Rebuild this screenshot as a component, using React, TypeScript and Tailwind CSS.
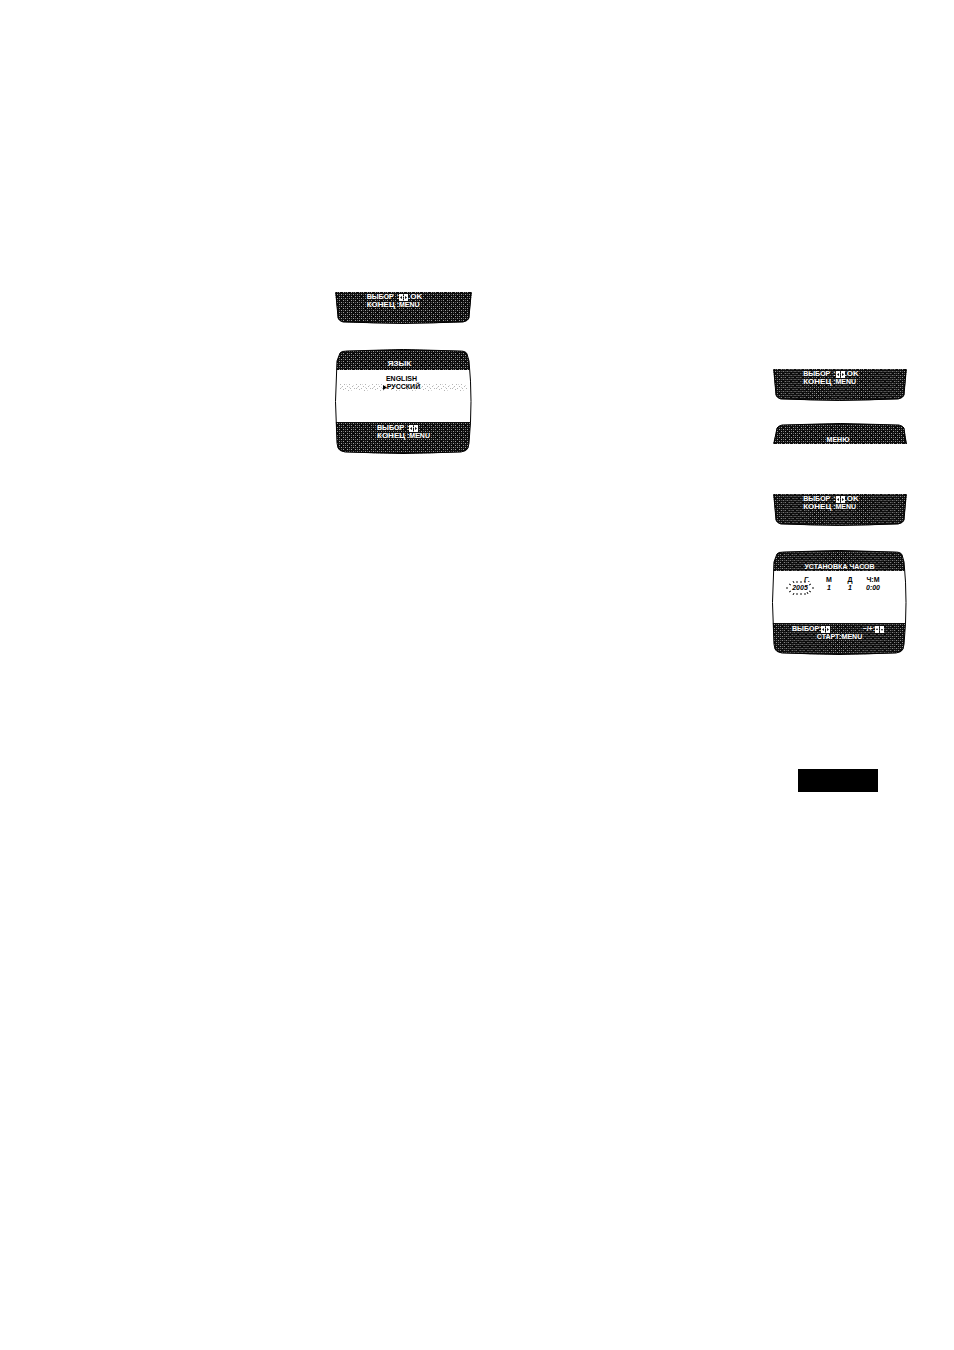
import type { ReactNode } from "react";

const SCREEN =
  "M5 4 Q6 2 12 2 Q68 -1 125 2 Q131 2 132 5 L134 12 Q138 52 134 94 L133 99 Q132 102 126 103 Q68 106 10 103 Q4 102 3 99 L2 94 Q-1 52 2 12 Z";

function Dither({ id }: { id: string }) {
  return (
    <defs>
      <pattern id={id} width="8" height="8" patternUnits="userSpaceOnUse">
        <rect width="8" height="8" fill="#0c0c0c" />
        <path
          d="M0 0h1v1h-1zM4 0h1v1h-1zM2 2h1v1h-1zM6 2h1v1h-1zM0 4h1v1h-1zM4 4h1v1h-1zM2 6h1v1h-1zM6 6h1v1h-1z"
          fill="#a0a0a0"
        />
        <path d="M2 0h1v1h-1zM6 4h1v1h-1zM0 2h1v1h-1zM4 6h1v1h-1zM0 6h1v1h-1zM4 2h1v1h-1z" fill="#585858" />
      </pattern>
    </defs>
  );
}

function Keys({ vertical = false }: { vertical?: boolean }) {
  return (
    <svg className="h-[7px] w-[9px] shrink-0" viewBox="0 0 9 7" aria-hidden="true">
      <path d="M0 0h4v7H0zM5 0h4v7H5z" fill="#fff" />
      {vertical ? (
        <path d="M1 4l1-2L3 4zM6 3l1 2L8 3z" fill="#111" />
      ) : (
        <path d="M3 2v3L1 3.5zM6 2v3l2-1.5z" fill="#111" />
      )}
    </svg>
  );
}

function Legend({ ok = false }: { ok?: boolean }) {
  return (
    <dl className="grid grid-cols-[30px_auto] text-[7px] leading-[8px] font-bold text-white">
      <dt>ВЫБОР</dt>
      <dd className="flex items-center">
        :<Keys />
        {ok && <span className="text-[8px]">.OK</span>}
      </dd>
      <dt className="text-[8px]">КОНЕЦ</dt>
      <dd>:MENU</dd>
    </dl>
  );
}

function FooterStrip({ id, className }: { id: string; className: string }) {
  return (
    <section className={`grid h-[32px] ${className}`}>
      <svg className="col-start-1 row-start-1 h-full w-full" viewBox="0 0 137 32" preserveAspectRatio="none" aria-hidden="true">
        <Dither id={id} />
        <path
          d="M0 0H137L134 26Q133 29 128 30Q68 33 8 30Q4 29 3 26Z"
          fill={`url(#${id})`}
        />
        <path d="M1 0L3 26Q4 29 8 30Q68 33 128 30Q133 29 134 26L136 0" fill="none" stroke="#000" />
      </svg>
      <div className="col-start-1 row-start-1 justify-self-center pt-px pr-[18px]">
        <Legend ok />
      </div>
    </section>
  );
}

function HeaderStrip() {
  return (
    <section className="grid h-[21px] w-[134px]">
      <svg className="col-start-1 row-start-1 h-full w-full" viewBox="0 0 134 21" preserveAspectRatio="none" aria-hidden="true">
        <Dither id="menu-header" />
        <path d="M0 21L4 5Q5 3 9 2Q68 -1 126 2Q130 3 131 5L134 21Z" fill="url(#menu-header)" />
        <path d="M1 21L4 5Q5 3 9 2Q68 -1 126 2Q130 3 131 5L133 21" fill="none" stroke="#000" />
      </svg>
      <h2 className="col-start-1 row-start-1 self-end pr-1 text-center text-[7px] leading-[8px] font-bold text-white">
        МЕНЮ
      </h2>
    </section>
  );
}

function Screen({
  id,
  title,
  footer,
  className,
  children,
}: {
  id: string;
  title: ReactNode;
  footer: ReactNode;
  className: string;
  children: ReactNode;
}) {
  return (
    <section className={`grid h-[105px] ${className}`}>
      <svg className="col-start-1 row-start-1 h-full w-full" viewBox="0 0 137 105" preserveAspectRatio="none" aria-hidden="true">
        <Dither id={id} />
        <clipPath id={`${id}-clip`}>
          <path d={SCREEN} />
        </clipPath>
        <g clipPath={`url(#${id}-clip)`}>
          <path d="M0 0H137V21H0zM0 73H137V105H0z" fill={`url(#${id})`} />
        </g>
        <path d={SCREEN} fill="none" stroke="#000" />
      </svg>
      <div className="col-start-1 row-start-1 flex flex-col">
        <h2 className="flex h-[21px] items-end justify-center leading-[12px] font-bold text-white">
          {title}
        </h2>
        <div className="h-[52px]">{children}</div>
        <div className="pt-[2px]">{footer}</div>
      </div>
    </section>
  );
}

function Highlight() {
  return (
    <svg className="col-start-1 row-start-1 h-[8px] w-full" aria-hidden="true">
      <defs>
        <pattern id="stipple" width="16" height="8" patternUnits="userSpaceOnUse">
          <path
            d="M1 1h1v1h-1zM5 1h1v1h-1zM10 1h1v1h-1zM3 3h1v1h-1zM8 3h1v1h-1zM13 3h1v1h-1zM1 5h1v1h-1zM6 5h1v1h-1zM11 5h1v1h-1zM15 5h1v1h-1zM4 6h1v1h-1zM9 7h1v1h-1z"
            fill="#b5b5b5"
          />
          <path d="M7 1h1v1h-1zM14 2h1v1h-1zM2 4h1v1h-1zM10 4h1v1h-1zM12 7h1v1h-1z" fill="#dadada" />
        </pattern>
      </defs>
      <rect width="100%" height="8" fill="url(#stipple)" />
    </svg>
  );
}

function Year() {
  return (
    <span className="grid place-items-center">
      <span className="col-start-1 row-start-1">2005</span>
      <svg className="col-start-1 row-start-1 -my-2 h-[16px] w-[28px]" viewBox="0 0 28 16" aria-hidden="true">
        <path
          d="M0 8h2M26 8h2M3 4l2 1M25 4l-2 1M3 12l2-1M25 12l-2-1M7 1l1 2M11 1v2M15 1v2M19 1v2M7 15l1-2M11 15v-2M15 15v-2M19 15v-2M22 14l-1-2"
          stroke="#111"
          fill="none"
        />
      </svg>
    </span>
  );
}

export default function App() {
  return (
    <main className="grid min-h-screen grid-cols-2 items-start bg-white font-['Liberation_Sans',Arial,sans-serif] text-black">
      <div className="flex flex-col items-end gap-[25px] pt-[292px] pr-[5px]">
        <FooterStrip id="language-footer" className="w-[137px]" />
        <Screen
          id="language"
          className="w-[137px]"
          title={<span className="pr-2 text-[8px]">ЯЗЫК</span>}
          footer={
            <div className="pl-[42px]">
              <Legend />
            </div>
          }
        >
          <ul className="px-1 pt-[5px] text-center text-[7px] leading-[8px] font-bold">
            <li className="pr-1">ENGLISH</li>
            <li className="grid">
              <Highlight />
              <span className="col-start-1 row-start-1 flex items-center justify-center pr-1">
                <svg className="h-[5px] w-[4px]" viewBox="0 0 4 5" aria-hidden="true">
                  <path d="M0 0L4 2.5L0 5Z" />
                </svg>
                РУССКИЙ
              </span>
            </li>
          </ul>
        </Screen>
      </div>

      <div className="flex flex-col items-end pt-[369px] pr-[47px]">
        <FooterStrip id="menu-footer" className="w-[134px]" />
        <div className="pt-[22px] pb-[50px]">
          <HeaderStrip />
        </div>
        <FooterStrip id="clock-footer" className="w-[134px]" />
        <div className="pt-[24px]">
          <Screen
            id="clock"
            className="w-[135px]"
            title={<span className="text-[7px] leading-[8px]">УСТАНОВКА ЧАСОВ</span>}
            footer={
              <div className="text-[7px] leading-[8px] font-bold text-white">
                <p className="flex justify-between pr-[23px] pl-[20px]">
                  <span className="flex items-center">
                    ВЫБОР:
                    <Keys />
                  </span>
                  <span className="flex items-center">
                    −/+:
                    <Keys vertical />
                  </span>
                </p>
                <p className="text-center">СТАРТ:MENU</p>
              </div>
            }
          >
            <table className="mt-[5px] ml-[13px] table-fixed border-collapse text-center text-[7px] leading-[8px] font-bold">
              <thead>
                <tr>
                  <th className="w-[30px] p-0 pl-[14px] italic">Г.</th>
                  <th className="w-[28px] p-0">М</th>
                  <th className="w-[14px] p-0">Д</th>
                  <th className="w-[32px] p-0">Ч:М</th>
                </tr>
              </thead>
              <tbody className="italic">
                <tr>
                  <td className="p-0">
                    <Year />
                  </td>
                  <td className="p-0">1</td>
                  <td className="p-0">1</td>
                  <td className="p-0">0:00</td>
                </tr>
              </tbody>
            </table>
          </Screen>
        </div>
        <div className="mt-[114px] mr-[29px] h-[23px] w-[80px] bg-black" />
      </div>
    </main>
  );
}
